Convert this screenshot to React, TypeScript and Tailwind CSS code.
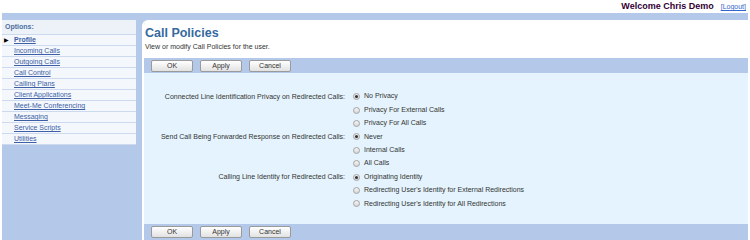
import React from "react";

const menu = [
  "Profile",
  "Incoming Calls",
  "Outgoing Calls",
  "Call Control",
  "Calling Plans",
  "Client Applications",
  "Meet-Me Conferencing",
  "Messaging",
  "Service Scripts",
  "Utilities",
];

const groups = [
  {
    label: "Connected Line Identification Privacy on Redirected Calls:",
    options: ["No Privacy", "Privacy For External Calls", "Privacy For All Calls"],
  },
  {
    label: "Send Call Being Forwarded Response on Redirected Calls:",
    options: ["Never", "Internal Calls", "All Calls"],
  },
  {
    label: "Calling Line Identity for Redirected Calls:",
    options: [
      "Originating Identity",
      "Redirecting User's Identity for External Redirections",
      "Redirecting User's Identity for All Redirections",
    ],
  },
];

function Radio({ checked }: { checked: boolean }) {
  return (
    <span className="w-[7px] h-[7px] rounded-full border border-[#a3a3a3] bg-gradient-to-b from-[#f4f4f4] to-[#d8d8d8] flex items-center justify-center shrink-0">
      {checked && <span className="w-[3px] h-[3px] rounded-full bg-[#333]" />}
    </span>
  );
}

function ButtonBar({ bottom }: { bottom?: boolean }) {
  return (
    <div className={`shrink-0 bg-[#b4c8ea] flex gap-[7px] pl-[7px] ${bottom ? "h-[20px] pt-[2px]" : "h-[15px] items-center"}`}>
      {["OK", "Apply", "Cancel"].map((b) => (
        <button
          key={b}
          className="w-[42px] h-[12px] border border-[#9a9a9a] rounded-[2px] bg-gradient-to-b from-[#ffffff] to-[#e2e2e2] text-[7px] leading-[10px] text-[#333]"
        >
          {b}
        </button>
      ))}
    </div>
  );
}

export default function App() {
  return (
    <div className="w-[750px] h-[240px] overflow-hidden bg-white font-['Liberation_Sans',Arial,sans-serif]">
      {/* header */}
      <div className="h-[13px] flex items-center justify-end pr-[4px] gap-[7px]">
        <span className="text-[9px] font-bold text-[#330033] leading-[13px]">Welcome Chris Demo</span>
        <a href="#" className="text-[7px] text-[#3366cc] underline leading-[13px]">
          [Logout]
        </a>
      </div>

      <div className="mx-[2px] h-[227px] bg-[#b4c8ea] pt-[7px] flex gap-[6px]">
        {/* sidebar */}
        <div className="w-[134px] self-start bg-[#f4f7fb]">
          <div className="h-[15px] bg-[#edf2f9] border-b border-[#cdd9ee] flex items-center pl-[3px] text-[7px] font-bold text-[#4d6e9e]">
            Options:
          </div>
          {menu.map((m, i) => (
            <div key={m} className="h-[11px] border-b border-[#cdd9ee] flex items-center relative pl-[12px]">
              {i === 0 && <span className="absolute left-[2px] text-[6px] leading-[11px] text-black">▶</span>}
              <a href="#" className={`text-[7px] leading-[10px] underline text-[#3c5fa6] ${i === 0 ? "font-bold" : ""}`}>
                {m}
              </a>
            </div>
          ))}
        </div>

        {/* main panel */}
        <div className="flex-1 border-l-2 border-white rounded-tl-[6px] overflow-hidden flex flex-col">
          <div className="shrink-0 h-[38px] bg-white pt-[6px] pl-[1px]">
            <h1 className="text-[12.5px] font-bold text-[#36699f] leading-[14px]">Call Policies</h1>
            <p className="text-[7px] text-[#333] leading-[9px] mt-[2px]">View or modify Call Policies for the user.</p>
          </div>
          <ButtonBar />
          <div className="shrink-0 h-[151px] bg-[#e4f3fd] pt-[17px]">
            {groups.map((g) => (
              <div key={g.label} className="grid grid-cols-[201px_1fr]">
                <div className="text-right text-[7px] leading-[13.4px] h-[13.4px] text-[#333] whitespace-nowrap">{g.label}</div>
                <div className="flex flex-col pl-[8px]">
                  {g.options.map((o, i) => (
                    <div key={o} className="h-[13.4px] flex items-center gap-[4px]">
                      <Radio checked={i === 0} />
                      <span className="text-[7px] text-[#333]">{o}</span>
                    </div>
                  ))}
                </div>
              </div>
            ))}
          </div>
          <ButtonBar bottom />
        </div>
      </div>
    </div>
  );
}
